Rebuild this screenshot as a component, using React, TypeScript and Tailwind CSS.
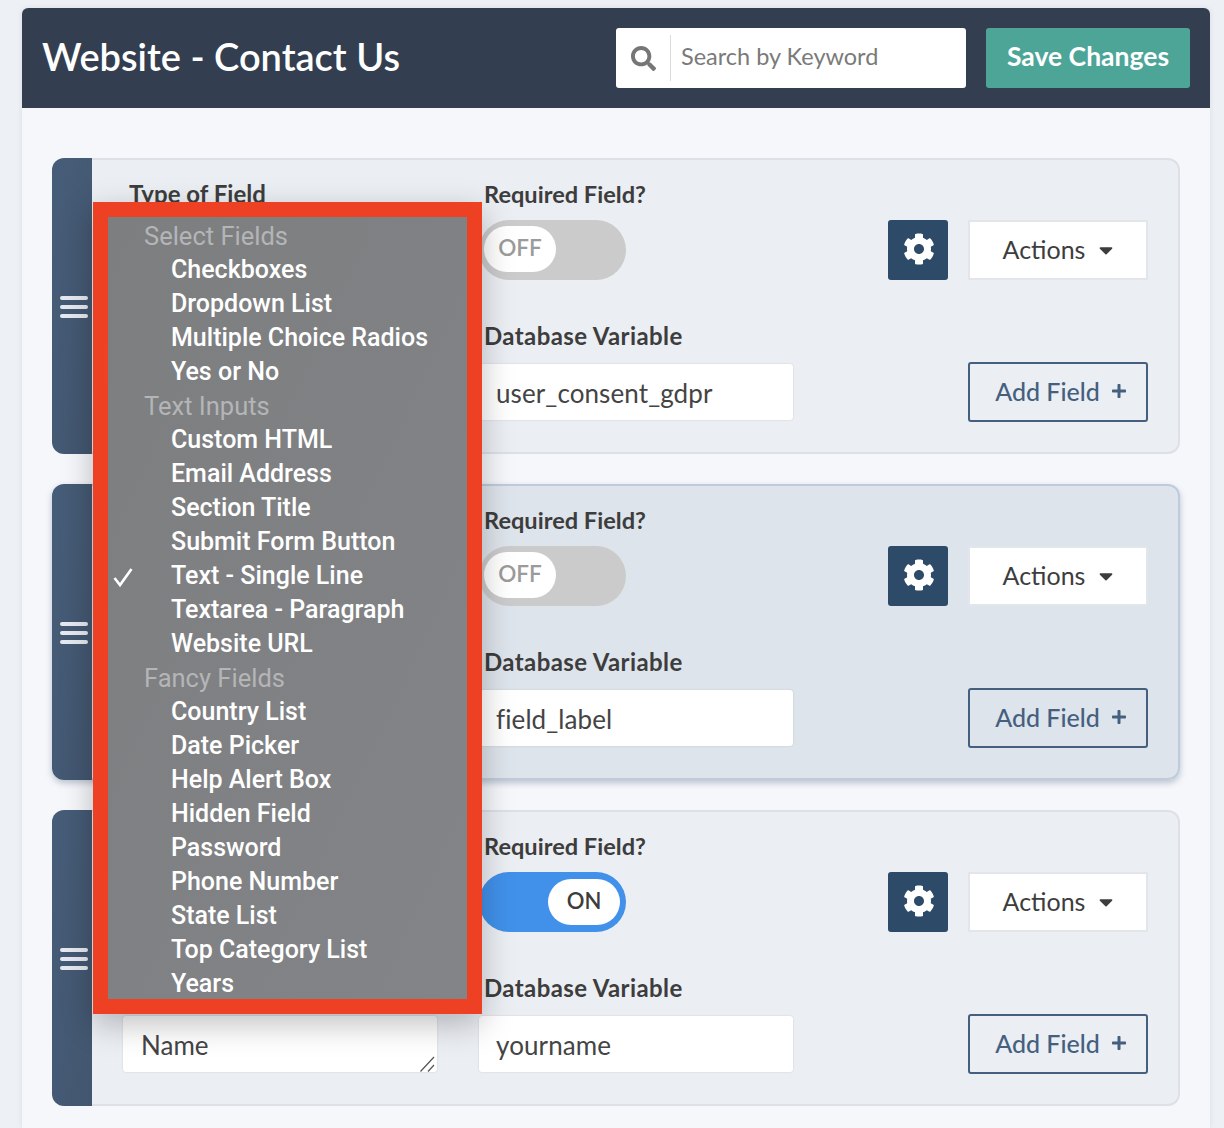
import { FaSearch, FaCog, FaCaretDown, FaPlus } from "react-icons/fa";

const groups = [
  { label: "Select Fields", items: ["Checkboxes", "Dropdown List", "Multiple Choice Radios", "Yes or No"] },
  { label: "Text Inputs", items: ["Custom HTML", "Email Address", "Section Title", "Submit Form Button", "Text - Single Line", "Textarea - Paragraph", "Website URL"] },
  { label: "Fancy Fields", items: ["Country List", "Date Picker", "Help Alert Box", "Hidden Field", "Password", "Phone Number", "State List", "Top Category List", "Years"] },
];

function Toggle({ on }: { on: boolean }) {
  return (
    <div className={on ? "flex h-[60px] w-[147px] items-center justify-end rounded-full bg-[#4191ea] pr-[6px]" : "flex h-[60px] w-[147px] items-center rounded-full bg-[#cbcbcb] pl-[5px]"}>
      <div className={on ? "flex h-[46px] w-[72px] items-center justify-center rounded-full bg-white pb-[3px] text-[22px] font-semibold text-[#3d3d3d]" : "mb-[2px] flex h-[46px] w-[72px] items-center justify-center rounded-full bg-white pb-[2px] text-[22.5px] font-semibold text-[#9b9b9b]"}>
        {on ? "ON" : "OFF"}
      </div>
    </div>
  );
}

function Card({ typeLabel, toggle, dbValue, textarea, active }: { typeLabel?: string; toggle: boolean; dbValue: string; textarea?: string; active?: boolean }) {
  return (
    <div className={active ? "flex h-[296px] rounded-l-xl rounded-r-xl shadow-[0_3px_6px_rgba(80,100,130,0.35)]" : "flex h-[296px]"}>
      <div className="flex w-10 shrink-0 items-center justify-end rounded-l-xl bg-gradient-to-br from-[#465d79] to-[#43566f] pr-[4px] pt-[2px]">
        <div className="flex flex-col gap-[5px]">
          <span className="h-[4px] w-7 rounded-full bg-[#e6eaf0]" />
          <span className="h-[4px] w-7 rounded-full bg-[#e6eaf0]" />
          <span className="h-[4px] w-7 rounded-full bg-[#e6eaf0]" />
        </div>
      </div>
      <div className={active ? "flex flex-1 rounded-r-xl border-2 border-l-0 border-[#bfcbda] bg-[#dee4eb] pl-[31px] pr-[30px] pt-[22px]" : "flex flex-1 rounded-r-xl border-2 border-l-0 border-[#dde0e6] bg-[#ebeef3] pl-[31px] pr-[30px] pt-[22px]"}>
        <div className="flex w-[314px] flex-col">
          <div className="h-6 pl-[6px] text-[24px] font-bold leading-6 text-[#3d3d3d]">{typeLabel}</div>
          <div className="h-[158px]" />
          <div className="relative h-[56px] w-[314px]">
            <textarea
              defaultValue={textarea}
              className="h-[56px] w-[314px] resize-none rounded-[3px] bg-white px-[18px] pt-[14px] text-[26px] leading-[30px] text-[#444] shadow-[0_0_2px_rgba(0,0,0,0.15)] outline-none"
            />
            <svg viewBox="0 0 15 16" className="absolute bottom-0 right-[2px] h-4 w-[15px]">
              <path d="M0.5 15.5 L14 1 M8 15.5 L14 9" stroke="#555" strokeWidth="1.2" fill="none" />
            </svg>
          </div>
        </div>
        <div className="ml-[42px] flex w-[314px] flex-col">
          <div className="mb-[14px] h-6 pl-[5px] text-[23.6px] font-bold leading-6 text-[#3d3d3d]">Required Field?</div>
          <Toggle on={toggle} />
          <div className="mb-4 mt-[44px] h-6 pl-[5px] text-[24px] font-bold leading-[24px] tracking-[0.4px] text-[#3d3d3d]">Database Variable</div>
          <input
            defaultValue={dbValue}
            className="h-[56px] w-[314px] rounded-[3px] bg-white pl-[17px] pr-[18px] pt-px text-[26px] tracking-[0.1px] text-[#444] shadow-[0_0_2px_rgba(0,0,0,0.15)] outline-none"
          />
        </div>
        <div className="ml-auto flex w-[260px] flex-col pt-[38px]">
          <div className="flex gap-5">
            <button className="flex h-[60px] w-[60px] items-center justify-center rounded-[3px] bg-[#2d4a68] pb-[2px] pl-[2px] text-[32px] text-white">
              <FaCog />
            </button>
            <button className="flex h-[60px] w-[180px] items-center justify-center gap-[10px] border-2 border-[#e2e5ea] bg-white pb-px pl-[4px] text-[25px] text-[#3d3d3d]">
              Actions
              <FaCaretDown className="text-[22px]" />
            </button>
          </div>
          <button className="ml-auto mt-[82px] flex h-[60px] w-[180px] items-center justify-center gap-[11px] rounded-[3px] border-2 border-[#45607f] pl-[6px] text-[25px] font-medium text-[#45607f]">
            Add Field
            <FaPlus className="mb-[3px] text-[16px]" />
          </button>
        </div>
      </div>
    </div>
  );
}

export default function App() {
  return (
    <div className="relative h-[1128px] overflow-hidden bg-[#edf0f5] pl-[22px] pr-[14px] pt-2 font-['Lato','Noto_Sans',sans-serif]">
      <div className="rounded-t-md bg-[#f5f7fb] shadow-[0_0_6px_rgba(0,0,0,0.08)]">
        <header className="flex h-[100px] items-center rounded-t-md bg-[#333f50] pl-5 pr-5">
          <h1 className="mb-1 text-[38px] font-semibold text-white">Website - Contact Us</h1>
          <div className="ml-auto flex h-[60px] w-[350px] items-center rounded-[3px] bg-white">
            <FaSearch className="ml-[15px] text-[25px] text-[#767676]" />
            <div className="ml-[14px] h-[46px] w-px bg-[#dcdcdc]" />
            <input placeholder="Search by Keyword" className="mb-[2px] ml-[10px] w-[280px] text-[23.5px] text-[#777] outline-none placeholder:text-[#7a7a7a]" />
          </div>
          <button className="ml-5 flex h-[60px] w-[204px] items-center justify-center rounded-[3px] bg-[#4da598] pb-[2px] text-[26.5px] font-bold text-white">
            Save Changes
          </button>
        </header>
        <main className="flex flex-col gap-[30px] px-[30px] pb-[22px] pt-[50px]">
          <Card typeLabel="Type of Field" toggle={false} dbValue="user_consent_gdpr" />
          <Card toggle={false} dbValue="field_label" active />
          <Card toggle dbValue="yourname" textarea="Name" />
        </main>
      </div>

      <div className="absolute left-[93px] top-[202px] w-[389px] border-[15px] border-[#ee4023] bg-gradient-to-br from-[#7d7e80] to-[#838487] font-['Roboto',sans-serif] shadow-[0_10px_30px_rgba(0,0,0,0.25)]">
        {groups.map((g) => (
          <div key={g.label}>
            <div className="flex h-[34px] items-center pl-9 pt-1 text-[25.5px] text-[#b4b5b7]">{g.label}</div>
            {g.items.map((it) => (
              <div key={it} className="relative flex h-[34px] items-center pl-[63px] pt-1 text-[25px] font-medium text-white">
                {it === "Text - Single Line" && (
                  <svg viewBox="0 0 20 20" className="absolute left-[5px] top-[9px] h-[22px] w-[20px]">
                    <path d="M1.5 11 L7 18 L18.5 2" fill="none" stroke="white" strokeWidth="2.6" />
                  </svg>
                )}
                {it}
              </div>
            ))}
          </div>
        ))}
      </div>
    </div>
  );
}
